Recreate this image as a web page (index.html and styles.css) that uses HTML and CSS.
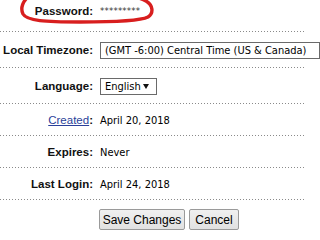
FILE: index.html
```html
<!DOCTYPE html>
<html>
<head>
<meta charset="utf-8">
<link rel="stylesheet" href="styles.css">
</head>
<body>
<div class="form">
  <svg class="circle" width="160" height="30" viewBox="0 0 160 30">
    <path d="M29 -4 C23 1, 20 8, 23 14 C27 21, 45 22, 80 22 C115 22, 140 21, 148 17 C154 13, 153 5, 146 1 C140 -3, 130 -4, 120 -5" fill="none" stroke="#d81e1e" stroke-width="3.4" stroke-linecap="round"/>
  </svg>
  <div class="row top">
    <div class="label">Password:</div>
    <div class="value stars">*********</div>
  </div>
  <div class="row tall">
    <div class="label">Local Timezone:</div>
    <div class="value"><span class="select wide">(GMT -6:00) Central Time (US &amp; Canada)</span></div>
  </div>
  <div class="row tall">
    <div class="label">Language:</div>
    <div class="value"><span class="select lang">English</span></div>
  </div>
  <div class="row">
    <div class="label"><a class="link" href="#">Created</a>:</div>
    <div class="value">April 20, 2018</div>
  </div>
  <div class="row">
    <div class="label">Expires:</div>
    <div class="value">Never</div>
  </div>
  <div class="row">
    <div class="label">Last Login:</div>
    <div class="value">April 24, 2018</div>
  </div>
  <div class="actions">
    <button class="btn save" type="button">Save Changes</button>
    <button class="btn cancel" type="button">Cancel</button>
  </div>
</div>
</body>
</html>
```
FILE: styles.css
```css
html, body {
  margin: 0;
  padding: 0;
  background: #fff;
  overflow: hidden;
}
.form {
  position: relative;
  width: 306px;
  color: #000;
}
.circle {
  position: absolute;
  left: 0;
  top: 0;
}
.row {
  display: grid;
  grid-template-columns: 93px 1fr;
  column-gap: 7px;
  align-items: center;
  height: 32px;
  box-sizing: border-box;
  background: linear-gradient(to right, #8a8a8a 1px, transparent 1px) 0 100% / 3px 1px repeat-x;
  white-space: nowrap;
}
.row.top {
  align-items: start;
  padding-top: 5px;
}
.row.tall {
  height: 36px;
}
.label {
  text-align: right;
  font: bold 11.5px/13px "Liberation Sans", Arial, sans-serif;
  color: #111;
}
.value {
  font: 11px/13px "DejaVu Sans Condensed", "DejaVu Sans", sans-serif;
  overflow: visible;
}
.stars {
  font-size: 9.5px;
  letter-spacing: 0.2px;
  color: #333;
  line-height: 9px;
  padding-top: 1px;
}
.link {
  color: #2a3f9a;
  font-weight: normal;
  text-decoration: underline;
}
.select {
  display: inline-block;
  box-sizing: border-box;
  height: 17px;
  line-height: 15px;
  border: 1px solid #6a6a6a;
  background: #fff;
  padding: 0 4px;
  white-space: nowrap;
  position: relative;
}
.select.wide {
  width: 220px;
}
.select.lang {
  width: 57px;
}
.select.lang::after {
  content: "";
  position: absolute;
  right: 7px;
  top: 5px;
  border-left: 3.5px solid transparent;
  border-right: 3.5px solid transparent;
  border-top: 5px solid #111;
}
.actions {
  display: flex;
  gap: 4px;
  padding: 9px 0 0 99px;
}
.btn {
  box-sizing: border-box;
  height: 21px;
  padding: 0;
  white-space: nowrap;
  font: 12px "Liberation Sans", Arial, sans-serif;
  color: #000;
  background: linear-gradient(#f0f0f0, #e1e1e1);
  border: 1px solid #9a9a9a;
  border-radius: 2px;
}
.btn.save {
  width: 86px;
}
.btn.cancel {
  width: 50px;
}
```
